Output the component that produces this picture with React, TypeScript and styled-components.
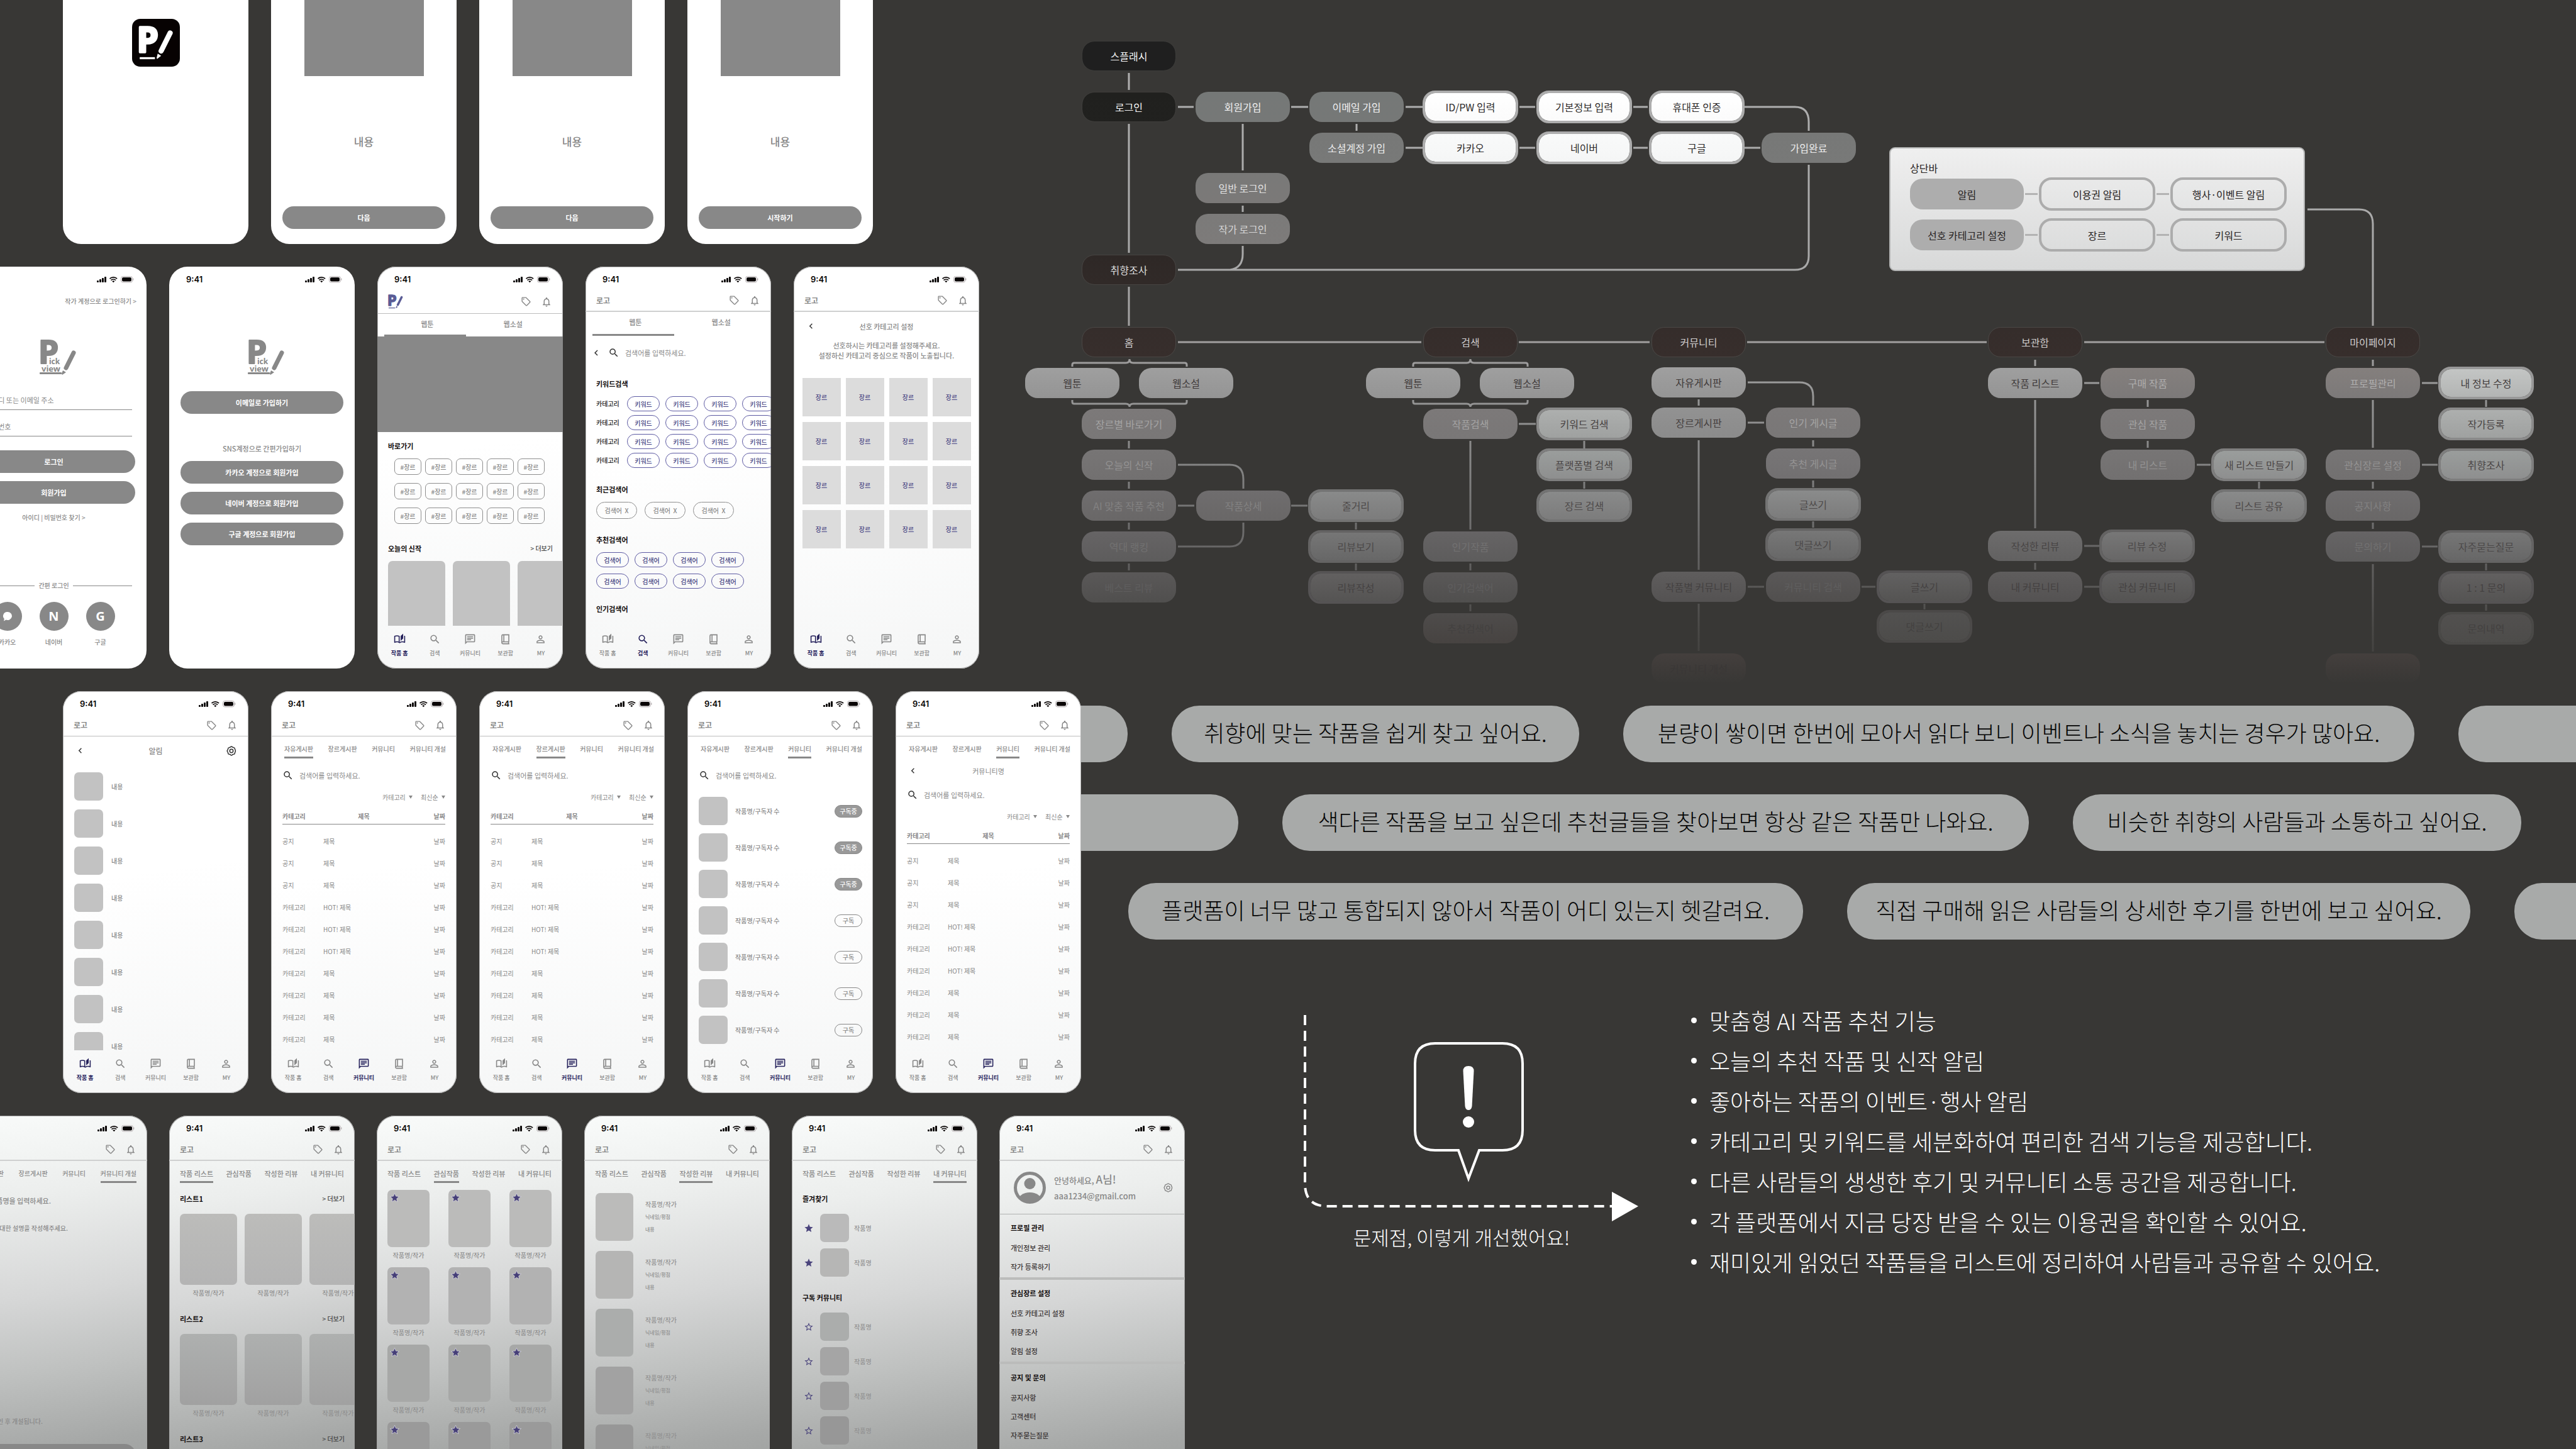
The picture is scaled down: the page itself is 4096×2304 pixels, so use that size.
import React from 'react';
import styled, { createGlobalStyle, css } from 'styled-components';
import {
  MdChevronLeft,
  MdNotificationsNone,
  MdOutlineAutoStories,
  MdOutlineChat,
  MdOutlineSell,
  MdPersonOutline,
  MdSearch,
  MdStar,
  MdStarBorder,
} from 'react-icons/md';

const BG = '#383735';
const GRAY = '#888888';
const NAVY = '#26225c';
const VIOLET = '#413e80';

const Global = createGlobalStyle`
  *, *::before, *::after { box-sizing: border-box; }
  html, body { margin: 0; background: ${BG}; }
  body, button, input, select, table {
    font-family: "Noto Sans CJK KR", "Noto Sans", sans-serif;
  }
  button { border: 0; padding: 0; background: none; color: inherit; font-weight: inherit; cursor: pointer; }
  ul, p, h1, h2, h3, figure { margin: 0; padding: 0; }
  ul { list-style: none; }
`;

const Page = styled.main`
  display: grid;
  grid-template-columns: 1600px 1fr;
  height: 100vh;
  overflow: hidden;
  background: ${BG};
`;

/* ---------- wireframe wall ---------- */

const Wall = styled.section`
  position: relative;
  z-index: 2;
  display: flex;
  flex-direction: column;
  align-items: flex-start;
  gap: 36px;
  min-width: 0;
`;

const PhoneRow = styled.div<{ $start: number; $gap?: number }>`
  display: flex;
  gap: ${(p) => p.$gap ?? 36}px;
  margin-left: ${(p) => p.$start}px;
`;

const TopRow = styled(PhoneRow)`
  height: 388px;
  align-items: flex-end;
`;

const skins = {
  plain: css`background: #fff;`,
  soft: css`
    background: linear-gradient(172deg, #fff 45%, #f5f6f6 100%);
    box-shadow: inset 0 0 0 1px #b4b4b4;
  `,
  dusk: css`
    background: linear-gradient(172deg, #f9fbfa 0, #eceeed 140px, #d6d7d7 300px, #bfc1c0 420px, #a6a8a7 540px, #999b9a 639px);
    box-shadow: inset 0 0 0 1px #a4a4a4;
  `,
};

const Shell = styled.article<{ $skin: keyof typeof skins }>`
  flex: none;
  display: flex;
  flex-direction: column;
  width: 295px;
  height: 639px;
  border-radius: 29px;
  overflow: hidden;
  color: ${GRAY};
  font-size: 10px;
  font-weight: 500;
  line-height: 16px;
  ${(p) => skins[p.$skin]}
`;

const StatusBar = styled.div`
  flex: none;
  display: flex;
  align-items: center;
  justify-content: space-between;
  height: 37px;
  padding: 3px 20px 0 27px;
  color: #0a0606;
  font: 600 13px/16px Inter, sans-serif;
`;

const Header = styled.header<{ $tall?: boolean; $thick?: boolean }>`
  flex: none;
  display: flex;
  align-items: center;
  height: ${(p) => (p.$tall ? 38 : 35)}px;
  padding: 0 17px;
  border-bottom: ${(p) => (p.$thick ? 2 : 1)}px solid ${(p) => (p.$thick ? '#cfd0d0' : '#bdbdbd')};
  gap: 15px;
`;

const Brand = styled.span`
  margin-right: auto;
  display: flex;
  font-size: 12px;
  font-weight: 700;
`;

const IconButton = styled.button<{ $size: number; $dark?: boolean }>`
  display: grid;
  place-items: center;
  color: ${(p) => (p.$dark ? '#333' : GRAY)};
  font-size: ${(p) => p.$size}px;
  line-height: 1;
`;

const Body = styled.div`
  flex: 1;
  min-height: 0;
  overflow: hidden;
  display: flex;
  flex-direction: column;
  & > * { flex: none; }
`;

const NavBar = styled.nav`
  flex: none;
  display: grid;
  grid-template-columns: repeat(5, 1fr);
  height: 68px;
  padding: 12px 7px 0;
`;

const NavItem = styled.button<{ $on: boolean }>`
  display: flex;
  flex-direction: column;
  align-items: center;
  height: 42px;
  gap: 5px;
  font-size: 9px;
  line-height: 16px;
  font-weight: ${(p) => (p.$on ? 700 : 500)};
  color: ${(p) => (p.$on ? NAVY : GRAY)};
  svg { width: 19px; height: 19px; }
`;

const StatusIcons = () => (
  <svg width="59" height="12" viewBox="0 0 59 12" aria-hidden="true">
    <rect x="0" y="8" width="3" height="3" rx="1" fill="#0a0606" />
    <rect x="4" y="6" width="3" height="5" rx="1" fill="#0a0606" />
    <rect x="8" y="4" width="3" height="7" rx="1" fill="#0a0606" />
    <rect x="12" y="2" width="3" height="9" rx="1" fill="#0a0606" />
    <path d="M20.5 5.2a8.4 8.4 0 0 1 11.6 0M22.6 7.6a5.4 5.4 0 0 1 7.4 0" fill="none" stroke="#0a0606" strokeWidth="1.8" />
    <path d="M26.3 11.2l-2-2a3 3 0 0 1 4 0z" fill="#0a0606" />
    <rect x="38.5" y="1.5" width="18" height="9.5" rx="3" fill="none" stroke="#b5aeb0" />
    <rect x="40" y="3" width="15" height="6.5" rx="2" fill="#0a0606" />
    <path d="M57.8 4.6v3.2" stroke="#b5aeb0" strokeWidth="1.2" />
  </svg>
);

const ShelfIcon = () => (
  <svg viewBox="0 0 24 24" fill="none" stroke="currentColor" strokeWidth="2" aria-hidden="true">
    <path d="M19 17H7a2 2 0 0 0-2 2.2A2 2 0 0 0 7 21h13M5 19V5a2 2 0 0 1 2-2h12v14M9 3v14M18.500 17v4" />
  </svg>
);

/* Eight-lobed gear outline around a ring. */
const gearPath = Array.from({ length: 16 }, (_, i) => {
  const a = ((i + 0.5) * Math.PI) / 8;
  const r = 8.6;
  const cx = 12 + r * Math.cos(a);
  const cy = 12 + r * Math.sin(a);
  return i === 0 ? `M${cx} ${cy}` : `A${i % 2 ? 5 : 2.6} ${i % 2 ? 5 : 2.6} 0 0 ${i % 2 ? 0 : 1} ${cx} ${cy}`;
}).join('') + 'Z';

const GearIcon = () => (
  <svg width="1em" height="1em" viewBox="0 0 24 24" fill="none" stroke="currentColor" strokeWidth="2" strokeLinejoin="round" aria-hidden="true">
    <path d={gearPath} />
    <circle cx="12" cy="12" r="3.6" />
  </svg>
);

const PenLogo = ({ color, width }: { color: string; width: number }) => (
  <svg width={width} viewBox="0 0 102 96" overflow="visible" aria-hidden="true">
    <text x="-4" y="75" fontFamily="Noto Sans, sans-serif" fontWeight="700" fontSize="100" fill={color} stroke={color} strokeWidth="6" strokeLinejoin="round">P</text>
    <path d="M66 71L92 19" stroke={color} strokeWidth="15" strokeLinecap="round" />
    <path d="M56 79l10 6-11 9q-2 0-2-3z" fill={color} />
    <path d="M4 92h44" stroke={color} strokeWidth="6" />
  </svg>
);

const FullLogo = () => (
  <svg width="58" height="57" viewBox="0 0 58 57" overflow="visible" role="img" aria-label="Pick view">
    <g fill={GRAY} fontFamily="Noto Sans, sans-serif" fontWeight="700">
      <text x="-2" y="39" fontSize="52" stroke={GRAY} strokeWidth="2" strokeLinejoin="round">P</text>
      <text x="15" y="40" fontSize="12">ick</text>
      <text x="3" y="52" fontSize="13">view</text>
      <rect x="0" y="53" width="35" height="3" rx="1" />
      <path d="M37 50l5 3-6 4q-1-1-1-2z" />
    </g>
    <path d="M42 46L54 22" stroke={GRAY} strokeWidth="7" strokeLinecap="round" />
    <path d="M36 47l8 5" stroke="#fff" strokeWidth="1" />
  </svg>
);

const navItems = [
  { label: '작품 홈', icon: <MdOutlineAutoStories /> },
  { label: '검색', icon: <MdSearch /> },
  { label: '커뮤니티', icon: <MdOutlineChat /> },
  { label: '보관함', icon: <ShelfIcon /> },
  { label: 'MY', icon: <MdPersonOutline /> },
];

type PhoneProps = {
  skin?: keyof typeof skins;
  header?: 'none' | 'text' | 'logo';
  thick?: boolean;
  nav?: number;
  children?: React.ReactNode;
};

const Phone = ({ skin = 'soft', header = 'text', thick, nav, children }: PhoneProps) => (
  <Shell $skin={skin}>
    <StatusBar>
      <span>9:41</span>
      <StatusIcons />
    </StatusBar>
    {header !== 'none' && (
      <Header $tall={header === 'logo'} $thick={thick}>
        <Brand>{header === 'logo' ? <PenLogo color="#5a5c95" width={24} /> : '로고'}</Brand>
        <IconButton $size={17} aria-label="이용권"><MdOutlineSell /></IconButton>
        <IconButton $size={18} aria-label="알림"><MdNotificationsNone /></IconButton>
      </Header>
    )}
    <Body>{children}</Body>
    {nav !== undefined && (
      <NavBar>
        {navItems.map((n, i) => (
          <NavItem key={n.label} $on={i === nav}>{n.icon}{n.label}</NavItem>
        ))}
      </NavBar>
    )}
  </Shell>
);

const Pill = styled.button`
  display: block;
  width: 259px;
  height: 36px;
  margin: 0 auto;
  border-radius: 18px;
  background: ${GRAY};
  color: #fff;
  font-size: 11px;
  font-weight: 700;
`;

/* onboarding */

const Onboard = styled(Shell)`
  height: 388px;
  border-radius: 0 0 29px 29px;
`;

const AppTile = styled.div`
  display: grid;
  place-items: center;
  width: 76px;
  height: 76px;
  margin: 30px auto 0;
  border-radius: 13px;
  background: #070202;
`;

const OnboardImage = styled.div`
  width: 190px;
  height: 121px;
  margin: 0 auto;
  background: ${GRAY};
`;

const OnboardText = styled.p`
  height: 207px;
  line-height: 207px;
  text-align: center;
  font-size: 17px;
`;

/* auth screens */

const LinkLine = styled.a<{ $right?: boolean }>`
  color: ${GRAY};
  text-decoration: none;
  font-size: 10px;
  text-align: ${(p) => (p.$right ? 'right' : 'center')};
  padding: ${(p) => (p.$right ? '10px 16px 0' : '14px 0 0')};
`;

const LogoBox = styled.div<{ $gap: number; $after: number }>`
  display: flex;
  justify-content: center;
  padding: ${(p) => p.$gap}px 0 ${(p) => p.$after}px 13px;
`;

const Field = styled.input`
  height: 30px;
  margin: 0 23px 12px;
  padding: 0 0 2px 16px;
  border: 0;
  border-bottom: 1px solid ${GRAY};
  background: none;
  font-size: 11px;
  &::placeholder { color: ${GRAY}; opacity: 1; }
`;

const PillStack = styled.div<{ $top?: number }>`
  display: grid;
  gap: 13px;
  margin-top: ${(p) => p.$top ?? 0}px;
`;

const Caption = styled.p`
  padding: 47px 0 12px;
  text-align: center;
  font-size: 11px;
`;

const OrLine = styled.div`
  display: flex;
  align-items: center;
  gap: 6px;
  margin: 92px 23px 0;
  &::before, &::after { content: ''; flex: 1; height: 1px; background: ${GRAY}; }
`;

const SocialRow = styled.div`
  display: flex;
  justify-content: center;
  gap: 28px;
  padding-top: 18px;
`;

const Social = styled.button`
  display: grid;
  justify-items: center;
  gap: 10px;
  width: 46px;
  font-size: 10px;
  line-height: 16px;
`;

const Disc = styled.span`
  display: grid;
  place-items: center;
  width: 46px;
  height: 46px;
  border-radius: 50%;
  background: ${GRAY};
  color: #fff;
  font: 700 20px/1 "Noto Sans", sans-serif;
`;

const Login = () => (
  <Phone skin="plain" header="none">
    <LinkLine href="#author" $right>작가 계정으로 로그인하기 &gt;</LinkLine>
    <LogoBox $gap={52} $after={26}><FullLogo /></LogoBox>
    <Field aria-label="아이디 또는 이메일 주소" placeholder="아이디 또는 이메일 주소" />
    <Field aria-label="비밀번호" type="text" placeholder="비밀번호" />
    <PillStack $top={10}>
      <Pill>로그인</Pill>
      <Pill>회원가입</Pill>
    </PillStack>
    <LinkLine href="#find">아이디 | 비밀번호 찾기 &gt;</LinkLine>
    <OrLine>간편 로그인</OrLine>
    <SocialRow>
      <Social>
        <Disc>
          <svg width="16" height="16" viewBox="0 0 16 16" fill="#fff"><path d="M8 1a7 6.500 0 1 1-2.500 12.600L2 15.500l.8-3.500A6.500 6.500 0 0 1 8 1z" /></svg>
        </Disc>
        카카오
      </Social>
      <Social><Disc>N</Disc>네이버</Social>
      <Social><Disc>G</Disc>구글</Social>
    </SocialRow>
  </Phone>
);

const SignUp = () => (
  <Phone skin="plain" header="none">
    <LogoBox $gap={78} $after={26}><FullLogo /></LogoBox>
    <Pill>이메일로 가입하기</Pill>
    <Caption>SNS계정으로 간편가입하기</Caption>
    <PillStack>
      <Pill>카카오 계정으로 회원가입</Pill>
      <Pill>네이버 계정으로 회원가입</Pill>
      <Pill>구글 계정으로 회원가입</Pill>
    </PillStack>
  </Phone>
);

/* shared screen parts */

const WideTabs = styled.div<{ $h: number }>`
  display: grid;
  grid-template-columns: 1fr 1fr;
  height: ${(p) => p.$h}px;
  padding: 0 11px;
`;

const WideTab = styled.button<{ $on?: boolean }>`
  display: flex;
  flex-direction: column;
  justify-content: space-between;
  align-items: stretch;
  font-size: 11px;
  line-height: 32px;
  &::after {
    content: '';
    width: 130px;
    height: 3px;
    background: ${(p) => (p.$on ? GRAY : 'transparent')};
  }
`;

const SearchRow = styled.label<{ $inset?: number }>`
  display: flex;
  align-items: center;
  height: 54px;
  padding-left: ${(p) => p.$inset ?? 18}px;
  color: #333;
  font-size: 18px;
  input {
    flex: 1;
    min-width: 0;
    margin-left: 9px;
    padding: 0;
    border: 0;
    background: none;
    font-size: 11px;
    &::placeholder { color: ${GRAY}; opacity: 1; }
  }
`;

const BackBox = styled.span`
  display: grid;
  margin-right: 10px;
`;

const Search = ({ back, inset }: { back?: boolean; inset?: number }) => (
  <SearchRow $inset={inset}>
    {back && <BackBox><MdChevronLeft /></BackBox>}
    <MdSearch />
    <input aria-label="검색" placeholder="검색어를 입력하세요." />
  </SearchRow>
);

const Section = styled.section<{ $top: number; $gap?: number }>`
  display: grid;
  grid-template-columns: minmax(0, 1fr);
  gap: ${(p) => p.$gap ?? 12}px;
  margin-top: ${(p) => p.$top}px;
  padding-left: 17px;
`;

const Heading = styled.h3`
  display: flex;
  justify-content: space-between;
  padding-right: 16px;
  color: #120d0d;
  font-size: 11px;
  font-weight: 700;
  line-height: 16px;
  a { color: #444; font-size: 10px; font-weight: 500; text-decoration: none; }
`;

const ChipLine = styled.div<{ $gap: number }>`
  display: flex;
  align-items: center;
  gap: ${(p) => p.$gap}px;
  color: #222;
`;

const Lines = styled.div<{ $gap: number; $inset?: number }>`
  display: grid;
  grid-template-columns: minmax(0, 1fr);
  gap: ${(p) => p.$gap}px;
  padding-left: ${(p) => p.$inset ?? 0}px;
`;

const Chip = styled.button<{ $kind: 'tag' | 'violet' | 'gray' }>`
  flex: none;
  border: 1px solid ${(p) => (p.$kind === 'violet' ? '#5e5ba3' : '#8e8e8e')};
  color: ${(p) => (p.$kind === 'violet' ? VIOLET : GRAY)};
  border-radius: ${(p) => (p.$kind === 'tag' ? 7 : 14)}px;
  width: ${(p) => ({ tag: 43, violet: 52, gray: 65 })[p.$kind]}px;
  height: ${(p) => ({ tag: 26, violet: 24, gray: 27 })[p.$kind]}px;
  font-size: 10px;
  white-space: pre;
`;

const ChipLabel = styled.span`
  flex: none;
  width: 40px;
  white-space: nowrap;
`;

const Cards = styled.div<{ $gap: number }>`
  display: flex;
  gap: ${(p) => p.$gap}px;
`;

const Cover = styled.div<{ $w: number; $h: number; $tone?: string }>`
  position: relative;
  flex: none;
  width: ${(p) => p.$w}px;
  height: ${(p) => p.$h}px;
  border-radius: 7px;
  background: ${(p) => p.$tone ?? '#c2c2c2'};
`;

const CoverStar = styled.span`
  position: absolute;
  top: 4px;
  left: 3px;
  display: grid;
  color: #463f78;
  font-size: 17px;
  path:last-child { stroke: #dedee4; stroke-width: 1px; }
`;

const Item = styled.figure`
  flex: none;
  display: grid;
  gap: 5px;
  justify-items: center;
  color: #909090;
`;

const times = (n: number) => Array.from({ length: n }, (_, i) => i);

const Hero = styled.div`
  height: 152px;
  background: ${GRAY};
`;

const Home = () => (
  <Phone header="logo" nav={0}>
    <WideTabs $h={36}><WideTab $on>웹툰</WideTab><WideTab>웹소설</WideTab></WideTabs>
    <Hero />
    <Section $top={14}>
      <Heading>바로가기</Heading>
      <Lines $gap={13} $inset={10}>
        {times(3).map((r) => (
          <ChipLine key={r} $gap={6}>{times(5).map((c) => <Chip key={c} $kind="tag">#장르</Chip>)}</ChipLine>
        ))}
      </Lines>
    </Section>
    <Section $top={31}>
      <Heading>오늘의 신작 <a href="#more">&gt; 더보기</a></Heading>
      <Cards $gap={12}>{times(3).map((i) => <Cover key={i} $w={91} $h={113} />)}</Cards>
    </Section>
  </Phone>
);

const SearchScreen = () => (
  <Phone thick nav={1}>
    <WideTabs $h={38}><WideTab $on>웹툰</WideTab><WideTab>웹소설</WideTab></WideTabs>
    <Search back inset={8} />
    <Section $top={14}>
      <Heading>키워드검색</Heading>
      <Lines $gap={6}>
        {times(4).map((r) => (
          <ChipLine key={r} $gap={9}>
            <ChipLabel>카테고리</ChipLabel>
            {times(4).map((c) => <Chip key={c} $kind="violet">키워드</Chip>)}
          </ChipLine>
        ))}
      </Lines>
    </Section>
    <Section $top={26}>
      <Heading>최근검색어</Heading>
      <ChipLine $gap={12}>{times(3).map((c) => <Chip key={c} $kind="gray">{'검색어  X'}</Chip>)}</ChipLine>
    </Section>
    <Section $top={25}>
      <Heading>추천검색어</Heading>
      <Lines $gap={10}>
        {times(2).map((r) => (
          <ChipLine key={r} $gap={9}>{times(4).map((c) => <Chip key={c} $kind="violet">검색어</Chip>)}</ChipLine>
        ))}
      </Lines>
    </Section>
    <Section $top={24}><Heading>인기검색어</Heading></Section>
  </Phone>
);

const TitleRow = styled.div<{ $h: number; $drop?: number }>`
  display: grid;
  grid-template-columns: 18px 1fr 18px;
  align-items: center;
  height: ${(p) => p.$h}px;
  padding: ${(p) => p.$drop ?? 0}px 18px 0;
  text-align: center;
`;

const Title = styled.h2<{ $big?: boolean; $light?: boolean }>`
  font-size: ${(p) => (p.$big ? 12 : 11)}px;
  font-weight: ${(p) => (p.$light ? 400 : 500)};
`;

const Back = () => <IconButton $size={17} $dark aria-label="뒤로"><MdChevronLeft /></IconButton>;

const Intro = styled.p`
  text-align: center;
  font-size: 11px;
  line-height: 16px;
`;

const GenreGrid = styled.div`
  display: grid;
  grid-template-columns: repeat(4, 61px);
  grid-auto-rows: 61px;
  justify-content: center;
  gap: 9px 8px;
  margin-top: 28px;
`;

const Genre = styled.button`
  background: #dcdcdc;
  color: #4a4784;
  font-size: 10px;
`;

const Preferences = () => (
  <Phone thick nav={0}>
    <TitleRow $h={45}><Back /><Title>선호 카테고리 설정</Title></TitleRow>
    <Intro>선호하시는 카테고리를 설정해주세요.<br />설정하신 카테고리 중심으로 작품이 노출됩니다.</Intro>
    <GenreGrid>{times(16).map((i) => <Genre key={i}>장르</Genre>)}</GenreGrid>
  </Phone>
);

const ListBox = styled.ul<{ $top: number; $gap: number }>`
  display: grid;
  gap: ${(p) => p.$gap}px;
  margin-top: ${(p) => p.$top}px;
  padding: 0 17px 0 18px;
`;

const ListRow = styled.li<{ $gap: number }>`
  display: flex;
  align-items: center;
  gap: ${(p) => p.$gap}px;
`;

const Alerts = () => (
  <Phone nav={0}>
    <TitleRow $h={45}>
      <Back /><Title $big>알림</Title>
      <IconButton $size={18} $dark aria-label="설정"><GearIcon /></IconButton>
    </TitleRow>
    <ListBox $top={12} $gap={14}>
      {times(8).map((i) => <ListRow key={i} $gap={13}><Cover $w={46} $h={45} />내용</ListRow>)}
    </ListBox>
  </Phone>
);

const Tabs = styled.div<{ $left: number; $size: number }>`
  display: flex;
  justify-content: space-between;
  height: 35px;
  padding: 12px 17px 0 ${(p) => p.$left}px;
  font-size: ${(p) => p.$size}px;
`;

const Tab = styled.button<{ $on: boolean }>`
  display: flex;
  flex-direction: column;
  gap: 4px;
  font-size: inherit;
  line-height: 16px;
  white-space: nowrap;
  &::after {
    content: '';
    align-self: stretch;
    height: 3px;
    background: ${(p) => (p.$on ? GRAY : 'transparent')};
  }
`;

const TabBar = ({ names, on, board }: { names: string[]; on: number; board?: boolean }) => (
  <Tabs $left={board ? 21 : 17} $size={board ? 10 : 11}>
    {names.map((n, i) => <Tab key={n} $on={i === on}>{n}</Tab>)}
  </Tabs>
);

const boardTabs = ['자유게시판', '장르게시판', '커뮤니티', '커뮤니티 개설'];
const myTabs = ['작품 리스트', '관심작품', '작성한 리뷰', '내 커뮤니티'];

const Filters = styled.div`
  display: flex;
  justify-content: flex-end;
  gap: 13px;
  height: 14px;
  padding-right: 18px;
`;

const Filter = styled.label`
  display: flex;
  align-items: center;
  gap: 5px;
  select {
    appearance: none;
    border: 0;
    padding: 0;
    background: none;
    color: ${GRAY};
    font-size: 10px;
  }
  &::after {
    content: '';
    border: 3px solid transparent;
    border-top: 5px solid ${GRAY};
    border-bottom: 0;
  }
`;

const Board = styled.table`
  width: 259px;
  margin: 12px 18px 0;
  border-collapse: collapse;
  table-layout: fixed;
  th { height: 24px; padding: 0; border-bottom: 1px solid ${GRAY}; text-align: center; font-weight: 700; }
  td { height: 35px; padding: 0; text-align: left; font-weight: 400; }
  th:first-child { width: 65px; text-align: left; }
  th:last-child { width: 65px; }
  th:last-child, td:last-child { text-align: right; }
  tbody::before { content: ''; display: block; height: 10px; }
`;

const Posts = ({ rows }: { rows: number }) => (
  <>
    <Filters>
      <Filter><select aria-label="카테고리"><option>카테고리</option></select></Filter>
      <Filter><select aria-label="정렬"><option>최신순</option></select></Filter>
    </Filters>
    <Board>
      <thead><tr><th>카테고리</th><th>제목</th><th>날짜</th></tr></thead>
      <tbody>
        {times(rows).map((i) => (
          <tr key={i}>
            <td>{i < 3 ? '공지' : '카테고리'}</td>
            <td>{i > 2 && i < 6 ? 'HOT! 제목' : '제목'}</td>
            <td>날짜</td>
          </tr>
        ))}
      </tbody>
    </Board>
  </>
);

const BoardScreen = ({ on }: { on: number }) => (
  <Phone nav={2}>
    <TabBar board names={boardTabs} on={on} />
    <Search />
    <Posts rows={10} />
  </Phone>
);

const Subscribe = styled.button<{ $on: boolean }>`
  width: 44px;
  height: 20px;
  margin-left: auto;
  border: 1px solid ${GRAY};
  border-radius: 10px;
  background: ${(p) => (p.$on ? '#999' : 'transparent')};
  color: ${(p) => (p.$on ? '#fff' : GRAY)};
  font-size: 10px;
  line-height: 16px;
`;

const Communities = () => (
  <Phone nav={2}>
    <TabBar board names={boardTabs} on={2} />
    <Search />
    <ListBox $top={7} $gap={13}>
      {times(7).map((i) => (
        <ListRow key={i} $gap={12}>
          <Cover $w={46} $h={45} />작품명/구독자 수
          <Subscribe $on={i < 3}>{i < 3 ? '구독중' : '구독'}</Subscribe>
        </ListRow>
      ))}
    </ListBox>
  </Phone>
);

const CommunityDetail = () => (
  <Phone nav={2}>
    <TabBar board names={boardTabs} on={2} />
    <TitleRow $h={31} $drop={8}><Back /><Title $light>커뮤니티명</Title></TitleRow>
    <Search />
    <Posts rows={9} />
  </Phone>
);

/* fourth row */

const FormLine = styled.p<{ $top: number; $end: number; $size: number }>`
  margin-top: ${(p) => p.$top}px;
  padding-right: ${(p) => p.$end}px;
  text-align: right;
  font-size: ${(p) => p.$size}px;
  white-space: nowrap;
`;

const CreateCommunity = () => (
  <Phone skin="dusk" thick>
    <TabBar board names={boardTabs} on={3} />
    <FormLine $top={20} $end={153} $size={11}>작품명을 입력하세요.</FormLine>
    <FormLine $top={28} $end={126} $size={10}>커뮤니티에 대한 설명을 작성해주세요.</FormLine>
    <FormLine $top={291} $end={166} $size={10}>관리자 승인 후 개설됩니다.</FormLine>
    <PillStack $top={28}><Pill>개설하기</Pill></PillStack>
  </Phone>
);

const listTones = ['linear-gradient(#bcbcba, #b4b4b4)', 'linear-gradient(#aeb0af, #a1a1a1)', '#9b9b9b'];

const MyLists = () => (
  <Phone skin="dusk" thick>
    <TabBar names={myTabs} on={0} />
    {listTones.map((tone, i) => (
      <Section key={tone} $top={i ? 25 : 17} $gap={16}>
        <Heading>리스트{i + 1} <a href="#more">&gt; 더보기</a></Heading>
        <Cards $gap={12}>
          {times(3).map((c) => <Item key={c}><Cover $w={91} $h={113} $tone={tone} />작품명/작가</Item>)}
        </Cards>
      </Section>
    ))}
  </Phone>
);

const FavoriteGrid = styled.div`
  display: grid;
  grid-template-columns: repeat(3, 67px);
  justify-content: center;
  gap: 11px 30px;
  margin-top: 11px;
`;

const favTones = ['#bbbbba', '#b2b2b2', '#a7a8a7', '#9a9a9a'];

const Favorites = () => (
  <Phone skin="dusk" thick>
    <TabBar names={myTabs} on={1} />
    <FavoriteGrid>
      {times(12).map((i) => (
        <Item key={i}>
          <Cover $w={67} $h={91} $tone={favTones[Math.floor(i / 3)]}><CoverStar><MdStar /></CoverStar></Cover>
          작품명/작가
        </Item>
      ))}
    </FavoriteGrid>
  </Phone>
);

const ReviewText = styled.div`
  display: grid;
  color: #929292;
  font-size: 8px;
  line-height: 20px;
  strong { font-size: 10px; font-weight: 500; }
`;

const reviewTones = ['#bbbbba', '#b5b5b4', '#abadac', '#a2a2a2', '#979797'];

const Reviews = () => (
  <Phone skin="dusk" thick>
    <TabBar names={myTabs} on={2} />
    <ListBox $top={16} $gap={16}>
      {reviewTones.map((tone) => (
        <ListRow key={tone} $gap={19}>
          <Cover $w={60} $h={76} $tone={tone} />
          <ReviewText><strong>작품명/작가</strong><span>닉네임/평점</span><span>내용</span></ReviewText>
        </ListRow>
      ))}
    </ListBox>
  </Phone>
);

const StarRow = styled(ListRow)`
  color: #929292;
  svg { color: #4a447c; font-size: 16px; margin-right: 2px; }
`;

const StarList = ({ tones, filled }: { tones: string[]; filled?: boolean }) => (
  <Lines as="ul" $gap={10} $inset={2}>
    {tones.map((t) => (
      <StarRow key={t} $gap={8}>
        {filled ? <MdStar /> : <MdStarBorder />}
        <Cover $w={46} $h={45} $tone={t} />작품명
      </StarRow>
    ))}
  </Lines>
);

const MyCommunities = () => (
  <Phone skin="dusk" thick>
    <TabBar names={myTabs} on={3} />
    <Section $top={17} $gap={16}>
      <Heading>즐겨찾기</Heading>
      <StarList filled tones={['#bababa', '#b6b6b5']} />
    </Section>
    <Section $top={25} $gap={16}>
      <Heading>구독 커뮤니티</Heading>
      <StarList tones={['#abadac', '#a5a5a5', '#9e9e9e', '#979797']} />
    </Section>
  </Phone>
);

const Profile = styled.div`
  display: grid;
  grid-template-columns: 51px 1fr 18px;
  align-items: center;
  gap: 13px;
  height: 85px;
  padding: 0 18px 0 23px;
  border-bottom: 1px solid #b0b2b1;
  font-size: 13px;
  line-height: 25px;
  strong { font-size: 17px; font-weight: 500; }
`;

const Menu = styled.section`
  padding: 9px 18px 2px;
  & + & { border-top: 4px solid #bbbcbb; }
  h3 { height: 24px; line-height: 24px; margin-bottom: 5px; }
`;

const MenuLink = styled.a`
  display: block;
  height: 30px;
  line-height: 30px;
  color: #3a3434;
  font-size: 11px;
  text-decoration: none;
`;

const menus = [
  { title: '프로필 관리', items: ['개인정보 관리', '작가 등록하기'] },
  { title: '관심장르 설정', items: ['선호 카테고리 설정', '취향 조사', '알림 설정'] },
  { title: '공지 및 문의', items: ['공지사항', '고객센터', '자주묻는질문'] },
];

const MyPage = () => (
  <Phone skin="dusk" thick>
    <Profile>
      <svg width="51" height="51" viewBox="0 0 51 51" aria-hidden="true">
        <clipPath id="face"><circle cx="25.5" cy="25.5" r="23" /></clipPath>
        <circle cx="25.500" cy="25.500" r="23" fill="none" stroke={GRAY} strokeWidth="5" />
        <g clipPath="url(#face)" fill={GRAY}>
          <circle cx="25.5" cy="19" r="9" />
          <ellipse cx="25.5" cy="47" rx="19" ry="14" />
        </g>
      </svg>
      <div>안녕하세요, <strong>A님!</strong><br />aaa1234@gmail.com</div>
      <IconButton $size={17} aria-label="설정"><GearIcon /></IconButton>
    </Profile>
    {menus.map((m) => (
      <Menu key={m.title}>
        <Heading>{m.title}</Heading>
        {m.items.map((t) => <MenuLink key={t} href="#menu">{t}</MenuLink>)}
      </Menu>
    ))}
  </Phone>
);

const PhoneWall = () => (
  <Wall>
    <TopRow $start={100}>
      <Onboard $skin="plain"><AppTile><PenLogo color="#fff" width={56} /></AppTile><Body /></Onboard>
      {['다음', '다음', '시작하기'].map((label, i) => (
        <Onboard key={i} $skin="plain">
          <OnboardImage />
          <OnboardText>내용</OnboardText>
          <PillStack><Pill>{label}</Pill></PillStack>
        </Onboard>
      ))}
    </TopRow>
    <PhoneRow $start={-62}><Login /><SignUp /><Home /><SearchScreen /><Preferences /></PhoneRow>
    <PhoneRow $start={100}><Alerts /><BoardScreen on={0} /><BoardScreen on={1} /><Communities /><CommunityDetail /></PhoneRow>
    <PhoneRow $start={-61} $gap={35}><CreateCommunity /><MyLists /><Favorites /><Reviews /><MyCommunities /><MyPage /></PhoneRow>
  </Wall>
);

/* ---------- information architecture diagram ---------- */

type Stop = [number, string];

const shades: Record<string, { fill: Stop[]; text: Stop[]; edge?: Stop[] }> = {
  dark: {
    fill: [[88, '#1f1f1f'], [170, '#20201e'], [429, '#2f2927'], [544, '#372e2c']],
    text: [[170, '#f5f5f5'], [429, '#dddddd'], [544, '#cfcccc']],
    edge: [[88, '#3b3b39'], [544, '#4a4644']],
  },
  gray: {
    fill: [[170, '#757877'], [300, '#7a7978'], [590, '#847f7d'], [635, '#7c7979'], [674, '#7b7978'], [739, '#757374'], [804, '#6c6a6a'], [869, '#636162'], [934, '#545352'], [1000, '#4a4846'], [1040, '#443f3d'], [1085, BG]],
    text: [[170, '#f0f0f0'], [234, '#ececec'], [364, '#d5d5d5'], [609, '#b0afaf'], [674, '#a5a4a4'], [739, '#949393'], [804, '#838282'], [869, '#727171'], [934, '#5f5e5e'], [1000, '#434140'], [1063, '#3a3736']],
  },
  light: {
    fill: [[590, '#9f9f9f'], [635, '#949494'], [690, '#8c8c8c'], [868, '#686767'], [933, '#595757'], [960, '#535151']],
    text: [[609, '#403a3a'], [672, '#453f3f'], [868, '#484545'], [933, '#444141']],
  },
  outline: {
    fill: [[150, '#ffffff'], [260, '#f5f6f6'], [590, '#c2c4c3'], [635, '#b2b4b3'], [674, '#a5a8a6'], [739, '#949696'], [804, '#838383'], [869, '#6f6f6f'], [934, '#5a5858'], [999, '#4d4c4a']],
    text: [[234, '#2e2b2b'], [609, '#443e3e'], [804, '#4e4a4a'], [869, '#4c4949'], [934, '#454242'], [999, '#434140']],
    edge: [[234, '#adadad'], [590, '#9c9c9c'], [674, '#8a8a8a'], [739, '#7e7e7e'], [804, '#737373'], [869, '#646363'], [934, '#555354'], [999, '#4a4947']],
  },
};

const shadeAt = (stops: Stop[], y: number) => {
  if (y <= stops[0][0]) return stops[0][1];
  for (let i = 1; i < stops.length; i++) {
    const [y1, c1] = stops[i];
    const [y0, c0] = stops[i - 1];
    if (y <= y1) {
      const t = (y - y0) / (y1 - y0);
      const ch = [1, 3, 5].map((k) => {
        const a = parseInt(c0.slice(k, k + 2), 16);
        const b = parseInt(c1.slice(k, k + 2), 16);
        return Math.round(a + (b - a) * t);
      });
      return `rgb(${ch.join(',')})`;
    }
  }
  return stops[stops.length - 1][1];
};

const ORIGIN = 1600;

type NodeKind = 'dark' | 'gray' | 'light' | 'outline';
type NodeData = [NodeKind, number, number, string];

const nodes: NodeData[] = [
  ['dark', 1795, 89, '스플래시'],
  ['dark', 1795, 170, '로그인'],
  ['gray', 1976, 170, '회원가입'],
  ['gray', 2157, 170, '이메일 가입'],
  ['outline', 2338, 170, 'ID/PW 입력'],
  ['outline', 2519, 170, '기본정보 입력'],
  ['outline', 2698, 170, '휴대폰 인증'],
  ['gray', 2157, 235, '소셜계정 가입'],
  ['outline', 2338, 235, '카카오'],
  ['outline', 2519, 235, '네이버'],
  ['outline', 2698, 235, '구글'],
  ['gray', 2876, 235, '가입완료'],
  ['gray', 1976, 299, '일반 로그인'],
  ['gray', 1976, 364, '작가 로그인'],
  ['dark', 1795, 429, '취향조사'],
  ['dark', 1795, 544, '홈'],
  ['dark', 2338, 544, '검색'],
  ['dark', 2701, 544, '커뮤니티'],
  ['dark', 3236, 544, '보관함'],
  ['dark', 3773, 544, '마이페이지'],
  ['light', 1705, 609, '웹툰'],
  ['light', 1886, 609, '웹소설'],
  ['gray', 1795, 674, '장르별 바로가기'],
  ['gray', 1795, 739, '오늘의 신작'],
  ['gray', 1795, 804, 'AI 맞춤 작품 추천'],
  ['gray', 1795, 869, '역대 랭킹'],
  ['gray', 1795, 934, '베스트 리뷰'],
  ['gray', 1977, 804, '작품상세'],
  ['outline', 2156, 804, '줄거리'],
  ['outline', 2156, 869, '리뷰보기'],
  ['outline', 2156, 934, '리뷰작성'],
  ['light', 2247, 609, '웹툰'],
  ['light', 2428, 609, '웹소설'],
  ['gray', 2338, 674, '작품검색'],
  ['outline', 2519, 674, '키워드 검색'],
  ['outline', 2519, 739, '플랫폼별 검색'],
  ['outline', 2519, 804, '장르 검색'],
  ['gray', 2338, 869, '인기작품'],
  ['gray', 2338, 934, '인기검색어'],
  ['gray', 2338, 999, '추천검색어'],
  ['light', 2701, 608, '자유게시판'],
  ['light', 2701, 672, '장르게시판'],
  ['light', 2701, 933, '작품별 커뮤니티'],
  ['gray', 2701, 1063, '커뮤니티 개설'],
  ['gray', 2883, 672, '인기 게시글'],
  ['gray', 2883, 737, '추천 게시글'],
  ['outline', 2883, 802, '글쓰기'],
  ['outline', 2883, 866, '댓글쓰기'],
  ['gray', 2883, 933, '커뮤니티 검색'],
  ['outline', 3060, 933, '글쓰기'],
  ['outline', 3060, 996, '댓글쓰기'],
  ['light', 3236, 609, '작품 리스트'],
  ['gray', 3415, 609, '구매 작품'],
  ['gray', 3415, 674, '관심 작품'],
  ['gray', 3415, 739, '내 리스트'],
  ['outline', 3592, 739, '새 리스트 만들기'],
  ['outline', 3592, 804, '리스트 공유'],
  ['light', 3236, 868, '작성한 리뷰'],
  ['outline', 3414, 868, '리뷰 수정'],
  ['light', 3236, 933, '내 커뮤니티'],
  ['outline', 3414, 933, '관심 커뮤니티'],
  ['gray', 3773, 609, '프로필관리'],
  ['outline', 3953, 609, '내 정보 수정'],
  ['outline', 3953, 674, '작가등록'],
  ['gray', 3773, 739, '관심장르 설정'],
  ['outline', 3953, 739, '취향조사'],
  ['gray', 3773, 804, '공지사항'],
  ['gray', 3773, 869, '문의하기'],
  ['outline', 3953, 869, '자주묻는질문'],
  ['outline', 3953, 934, '1 : 1 문의'],
  ['outline', 3953, 999, '문의내역'],
  ['gray', 3773, 1063, ''],
];

const brace = (c: number) =>
  `M${c - 91} 583v-3q0-3 3-3h82q6 0 6-6q0 6 6 6h82q3 0 3 3v3` +
  `M${c - 91} 636v3q0 3 3 3h82q6 0 6 5q0-5 6-5h82q3 0 3-3v-3`;

const wires = [
  'M1795 116V143M1795 197V402M1795 456V518',
  'M1873 170H1898M2053 170H2080M2235 170H2262M2416 170H2441M2597 170H2620',
  'M2774 170H2854Q2876 170 2876 194V208',
  'M2157 197V208M2235 235H2262M2416 235H2441M2597 235H2620M2774 235H2799',
  'M1976 197V271M1976 327V337M1976 391V404Q1976 426 1956 429',
  'M2876 262V407Q2876 429 2854 429H1873',
  'M1873 544H2260M2415 544H2623M2778 544H3159M3314 544H3696',
  brace(1796), brace(2338),
  'M1795 701V713M1795 766V777M1795 831V842M1795 896V907',
  'M1873 739H1955Q1977 739 1977 762V777M1977 831V846Q1977 869 1955 869H1873',
  'M1873 804H1899M2053 804H2079M2156 831V842M2156 896V907',
  'M2415 674H2442M2338 701V842M2338 896V907M2338 961V972M2519 701V713M2519 766V777',
  'M2701 635V645M2701 700V906M2701 960V1035',
  'M2779 608H2861Q2883 608 2883 630V645M2779 672H2805M2883 700V710M2883 764V775M2883 829V839',
  'M2779 933H2805M2960 933H2982M3060 960V969',
  'M3236 572V582M3236 636V840M3236 895V906M3314 609H3338M3415 636V647M3415 701V712M3493 739H3515',
  'M3592 766V777M3314 868H3338M3314 933H3338',
  'M3669 333H3751Q3773 333 3773 356V518M3773 572V582M3773 636V712M3773 766V777M3773 831V841M3773 897V1036',
  'M3851 609H3876M3851 739H3876M3851 869H3876M3953 636V647M3953 896V907M3953 961V971',
].join('');

const wireStops: Stop[] = [[0, '#b2b2b2'], [430, '#a8a8a8'], [544, '#a19f9f'], [610, '#999999'], [740, '#848484'], [805, '#757575'], [870, '#676666'], [935, '#595857'], [1000, '#4a4947'], [1080, '#3c3b39']];

const Diagram = styled.section`
  position: relative;
  height: 1088px;
  font-size: 16px;
`;

const Wires = styled.svg`
  position: absolute;
  inset: 0;
  overflow: visible;
`;

const Node = styled.div<{ $kind: NodeKind; $x: number; $y: number }>`
  position: absolute;
  left: ${(p) => p.$x - ORIGIN}px;
  top: ${(p) => p.$y}px;
  transform: translate(-50%, -50%);
  display: grid;
  place-items: center;
  width: ${(p) => (p.$kind === 'outline' ? 152 : 150)}px;
  height: ${(p) => (p.$kind === 'outline' ? 52 : 48)}px;
  border-radius: 20px;
  border: ${(p) => (p.$kind === 'outline' ? 4 : p.$kind === 'dark' ? 1 : 0)}px solid ${(p) => shadeAt(shades[p.$kind].edge ?? shades[p.$kind].fill, p.$y)};
  background: linear-gradient(${(p) => shadeAt(shades[p.$kind].fill, p.$y - 24)}, ${(p) => shadeAt(shades[p.$kind].fill, p.$y + 24)}) padding-box;
  color: ${(p) => shadeAt(shades[p.$kind].text, p.$y)};
  line-height: 24px;
  white-space: nowrap;
`;

const TopPanel = styled.div`
  position: absolute;
  left: 1404px;
  top: 234px;
  width: 661px;
  height: 197px;
  padding: 21px 0 0 31px;
  border: 2px solid #b3b4b4;
  border-radius: 9px;
  background: linear-gradient(#efefef, #d8d9d9);
  color: #262222;
`;

const PanelTitle = styled.h2`
  font-size: 16px;
  font-weight: 400;
  line-height: 20px;
  margin-bottom: 5px;
`;

const PanelRow = styled.div`
  display: flex;
  align-items: center;
  gap: 2px;
  height: 53px;
  margin-bottom: 12px;
`;

const PanelNode = styled.span<{ $solid?: boolean }>`
  display: grid;
  place-items: center;
  width: ${(p) => (p.$solid ? 181 : 185)}px;
  height: ${(p) => (p.$solid ? 49 : 53)}px;
  border: ${(p) => (p.$solid ? 0 : 4)}px solid #acacac;
  border-radius: 20px;
  background: ${(p) => (p.$solid ? '#adadad' : 'transparent')};
  line-height: 24px;
`;

const Dash = styled.span`
  width: 20px;
  height: 3px;
  background: #b3b3b3;
`;

const panelRows = [
  ['알림', '이용권 알림', '행사·이벤트 알림'],
  ['선호 카테고리 설정', '장르', '키워드'],
];

const Architecture = () => (
  <Diagram aria-label="정보 구조도">
    <Wires width="2496" height="1088" viewBox="1600 0 2496 1088" aria-hidden="true">
      <linearGradient id="wire" gradientUnits="userSpaceOnUse" x1="0" y1="0" x2="0" y2="1080">
        {wireStops.map(([y, c]) => <stop key={y} offset={y / 1080} stopColor={c} />)}
      </linearGradient>
      <path d={wires} fill="none" stroke="url(#wire)" strokeWidth="3" />
    </Wires>
    {nodes.map(([kind, x, y, label]) => <Node key={`${x}-${y}`} $kind={kind} $x={x} $y={y}>{label}</Node>)}
    <TopPanel>
      <PanelTitle>상단바</PanelTitle>
      {panelRows.map(([a, b, c]) => (
        <PanelRow key={a}>
          <PanelNode $solid>{a}</PanelNode><Dash /><PanelNode>{b}</PanelNode><Dash /><PanelNode>{c}</PanelNode>
        </PanelRow>
      ))}
    </TopPanel>
  </Diagram>
);

/* ---------- user voices and improvements ---------- */

const Right = styled.section`
  display: flex;
  flex-direction: column;
  min-width: 0;
  overflow: hidden;
`;

const Voices = styled.div`
  display: grid;
  gap: 51px;
  margin-top: 34px;
`;

const VoiceRow = styled.div<{ $start: number }>`
  display: flex;
  gap: 70px;
  margin-left: ${(p) => p.$start}px;
`;

const Voice = styled.p<{ $w: number }>`
  flex: none;
  width: ${(p) => p.$w}px;
  height: 90px;
  border-radius: 44px;
  background: #a8aaa9;
  color: #050505;
  text-align: center;
  font-size: 36px;
  font-weight: 300;
  line-height: 84px;
  white-space: nowrap;
`;

const voices: { start: number; items: [number, string][] }[] = [
  { start: 0, items: [[193, ''], [648, '취향에 맞는 작품을 쉽게 찾고 싶어요.'], [1258, '분량이 쌓이면 한번에 모아서 읽다 보니 이벤트나 소식을 놓치는 경우가 많아요.'], [400, '']] },
  { start: 0, items: [[369, ''], [1187, '색다른 작품을 보고 싶은데 추천글들을 찾아보면 항상 같은 작품만 나와요.'], [713, '비슷한 취향의 사람들과 소통하고 싶어요.']] },
  { start: 194, items: [[1073, '플랫폼이 너무 많고 통합되지 않아서 작품이 어디 있는지 헷갈려요.'], [991, '직접 구매해 읽은 사람들의 상세한 후기를 한번에 보고 싶어요.'], [400, '']] },
];

const Outcome = styled.div`
  display: flex;
  align-items: flex-start;
  gap: 83px;
  margin: 96px 0 0 472px;
`;

const Problem = styled.figure`
  flex: none;
  width: 534px;
  figcaption {
    padding-right: 30px;
    color: #fff;
    text-align: center;
    font-size: 31px;
    font-weight: 300;
    line-height: 40px;
  }
`;

const Improvements = styled.ul`
  color: #fff;
  font-size: 36px;
  font-weight: 300;
  line-height: 64px;
  li {
    display: flex;
    align-items: center;
    gap: 20px;
    white-space: nowrap;
  }
  li::before {
    content: '';
    width: 9px;
    height: 9px;
    border-radius: 50%;
    background: #fff;
  }
`;

const improvements = [
  '맞춤형 AI 작품 추천 기능',
  '오늘의 추천 작품 및 신작 알림',
  '좋아하는 작품의 이벤트·행사 알림',
  '카테고리 및 키워드를 세분화하여 편리한 검색 기능을 제공합니다.',
  '다른 사람들의 생생한 후기 및 커뮤니티 소통 공간을 제공합니다.',
  '각 플랫폼에서 지금 당장 받을 수 있는 이용권을 확인할 수 있어요.',
  '재미있게 읽었던 작품들을 리스트에 정리하여 사람들과 공유할 수 있어요.',
];

const App = () => (
  <>
    <Global />
    <Page>
      <PhoneWall />
      <Right>
        <Architecture />
        <Voices>
          {voices.map((row) => (
            <VoiceRow key={row.items[1][1]} $start={row.start}>
              {row.items.map(([w, text], i) => <Voice key={i} $w={w}>{text}</Voice>)}
            </VoiceRow>
          ))}
        </Voices>
        <Outcome>
          <Problem>
            <svg width="534" height="352" viewBox="2071 1589 534 352" fill="none" stroke="#fff" strokeWidth="4" aria-hidden="true">
              <path d="M2074 1613V1881Q2074 1917 2110 1917H2562" strokeDasharray="16 9" />
              <path d="M2562 1894L2604 1917L2562 1941Z" fill="#fff" stroke="none" />
              <path d="M2281 1658H2388Q2420 1658 2420 1690V1796Q2420 1828 2388 1828H2351L2334 1873L2318 1828H2281Q2249 1828 2249 1796V1690Q2249 1658 2281 1658Z" />
              <path d="M2325.500 1702q0-8 8.500-8t8.500 8l-3 56q-1 6-5.500 6t-5.500-6z" fill="#fff" stroke="none" />
              <circle cx="2334" cy="1783" r="9" fill="#fff" stroke="none" />
            </svg>
            <figcaption>문제점, 이렇게 개선했어요!</figcaption>
          </Problem>
          <Improvements>{improvements.map((t) => <li key={t}>{t}</li>)}</Improvements>
        </Outcome>
      </Right>
    </Page>
  </>
);

export default App;
